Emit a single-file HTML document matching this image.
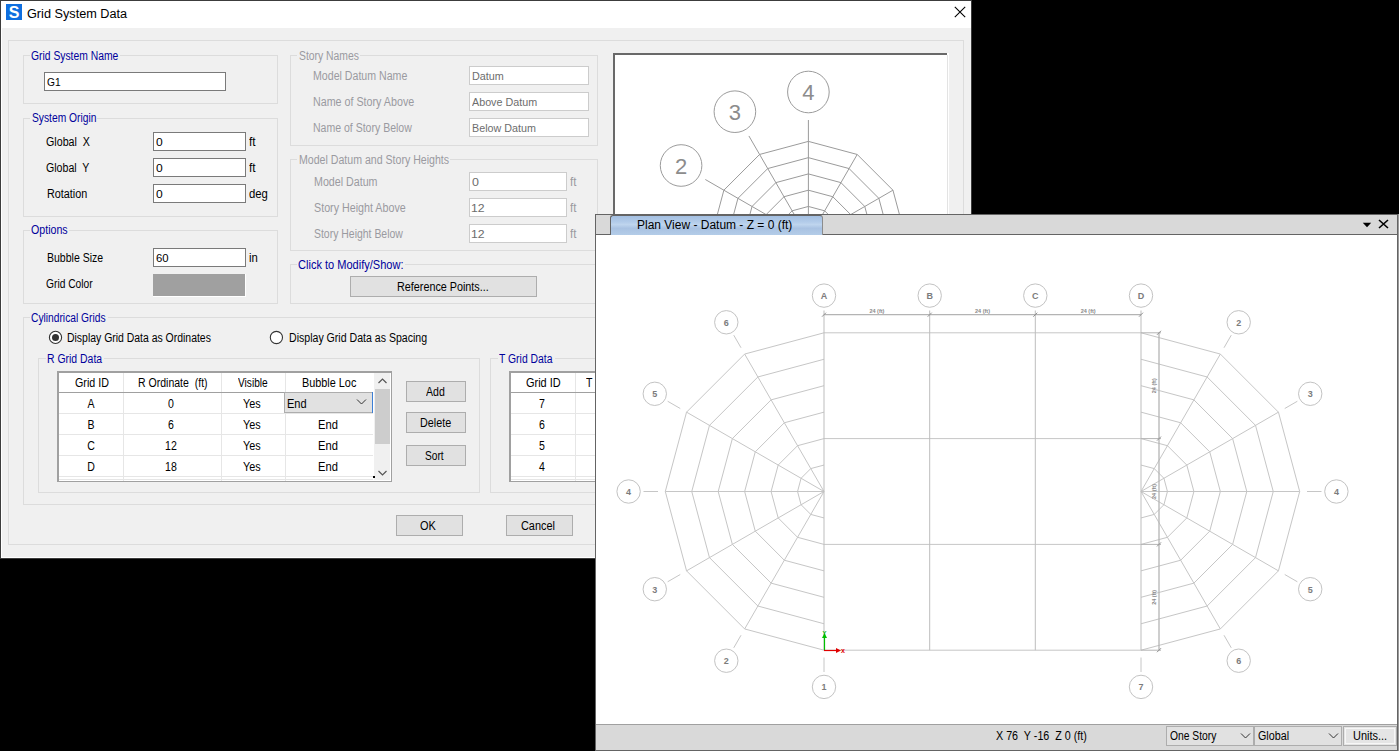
<!DOCTYPE html><html><head><meta charset="utf-8"><style>
html,body{margin:0;padding:0;}
body{width:1399px;height:751px;background:#000;position:relative;overflow:hidden;font-family:"Liberation Sans", sans-serif;}
.t{position:absolute;white-space:pre;font-family:"Liberation Sans", sans-serif;}
.r{position:absolute;box-sizing:content-box;}
svg{position:absolute;}
</style></head><body>
<div class="r" style="left:0px;top:0px;width:972px;height:559px;background:#f0f0f0;"></div>
<div class="r" style="left:0px;top:0px;width:971px;height:1px;background:#3c3c3c;"></div>
<div class="r" style="left:0px;top:0px;width:1px;height:559px;background:#3c3c3c;"></div>
<div class="r" style="left:971px;top:0px;width:1px;height:559px;background:#3c3c3c;"></div>
<div class="r" style="left:1px;top:1px;width:970px;height:27px;background:#ffffff;"></div>
<div class="r" style="left:1px;top:557px;width:970px;height:1px;background:#ffffff;"></div>
<div class="r" style="left:1px;top:28px;width:1px;height:529px;background:#ffffff;"></div>
<div class="r" style="left:0px;top:558px;width:972px;height:1px;background:#3c3c3c;"></div>
<div class="r" style="left:6px;top:4px;width:16px;height:16px;background:#0f6fdf;"></div>
<svg style="left:6px;top:4px" width="16" height="16" viewBox="0 0 16 16"><text x="8" y="14.3" font-size="16" font-weight="bold" fill="#fff" text-anchor="middle" font-family="Liberation Sans">S</text></svg>
<div class="t" style="left:27.09px;top:8px;font-size:12.5px;line-height:12.5px;color:#000;transform:scaleX(1.0148);transform-origin:0 0;">Grid System Data</div>
<svg style="left:954px;top:6px" width="12" height="12" viewBox="0 0 12 12"><path d="M0.8 0.8L11.2 11.2M11.2 0.8L0.8 11.2" stroke="#000" stroke-width="1.1"/></svg>
<div class="r" style="left:8px;top:40px;width:955px;height:1px;background:#dcdcdc;"></div>
<div class="r" style="left:8px;top:544px;width:956px;height:1px;background:#dcdcdc;"></div>
<div class="r" style="left:8px;top:40px;width:1px;height:504px;background:#dcdcdc;"></div>
<div class="r" style="left:963px;top:40px;width:1px;height:504px;background:#dcdcdc;"></div>
<div class="r" style="left:23px;top:55px;width:7px;height:1px;background:#dcdcdc;"></div>
<div class="r" style="left:120px;top:55px;width:157px;height:1px;background:#dcdcdc;"></div>
<div class="r" style="left:23px;top:103px;width:255px;height:1px;background:#dcdcdc;"></div>
<div class="r" style="left:23px;top:55px;width:1px;height:48px;background:#dcdcdc;"></div>
<div class="r" style="left:277px;top:55px;width:1px;height:48px;background:#dcdcdc;"></div>
<div class="t" style="left:31.18px;top:50px;font-size:12px;line-height:12px;color:#00009c;transform:scaleX(0.8608);transform-origin:0 0;">Grid System Name</div>
<div class="r" style="left:44px;top:72px;width:180px;height:17px;background:#fff;border:1px solid #7a7a7a;"></div>
<div class="t" style="left:46.79px;top:77px;font-size:11px;line-height:11px;color:#000;transform:scaleX(0.9265);transform-origin:0 0;">G1</div>
<div class="r" style="left:23px;top:118px;width:7px;height:1px;background:#dcdcdc;"></div>
<div class="r" style="left:97px;top:118px;width:180px;height:1px;background:#dcdcdc;"></div>
<div class="r" style="left:23px;top:216px;width:255px;height:1px;background:#dcdcdc;"></div>
<div class="r" style="left:23px;top:118px;width:1px;height:98px;background:#dcdcdc;"></div>
<div class="r" style="left:277px;top:118px;width:1px;height:98px;background:#dcdcdc;"></div>
<div class="t" style="left:31.53px;top:112px;font-size:12px;line-height:12px;color:#00009c;transform:scaleX(0.8548);transform-origin:0 0;">System Origin</div>
<div class="t" style="left:46.27px;top:136px;font-size:12px;line-height:12px;color:#000;transform:scaleX(0.8907);transform-origin:0 0;">Global  X</div>
<div class="r" style="left:153px;top:132px;width:91px;height:17px;background:#fff;border:1px solid #7a7a7a;"></div>
<div class="t" style="left:155.66px;top:137px;font-size:11px;line-height:11px;color:#000;transform:scaleX(1.0943);transform-origin:0 0;">0</div>
<div class="t" style="left:248.55px;top:136px;font-size:12px;line-height:12px;color:#000;transform:scaleX(0.9922);transform-origin:0 0;">ft</div>
<div class="t" style="left:46.27px;top:162px;font-size:12px;line-height:12px;color:#000;transform:scaleX(0.8841);transform-origin:0 0;">Global  Y</div>
<div class="r" style="left:153px;top:158px;width:91px;height:17px;background:#fff;border:1px solid #7a7a7a;"></div>
<div class="t" style="left:155.66px;top:163px;font-size:11px;line-height:11px;color:#000;transform:scaleX(1.0943);transform-origin:0 0;">0</div>
<div class="t" style="left:248.55px;top:162px;font-size:12px;line-height:12px;color:#000;transform:scaleX(0.9922);transform-origin:0 0;">ft</div>
<div class="t" style="left:46.64px;top:188px;font-size:12px;line-height:12px;color:#000;transform:scaleX(0.901);transform-origin:0 0;">Rotation</div>
<div class="r" style="left:153px;top:184px;width:91px;height:17px;background:#fff;border:1px solid #7a7a7a;"></div>
<div class="t" style="left:155.66px;top:189px;font-size:11px;line-height:11px;color:#000;transform:scaleX(1.0943);transform-origin:0 0;">0</div>
<div class="t" style="left:249.23px;top:188px;font-size:12px;line-height:12px;color:#000;transform:scaleX(0.944);transform-origin:0 0;">deg</div>
<div class="r" style="left:23px;top:230px;width:7px;height:1px;background:#dcdcdc;"></div>
<div class="r" style="left:69px;top:230px;width:208px;height:1px;background:#dcdcdc;"></div>
<div class="r" style="left:23px;top:303px;width:255px;height:1px;background:#dcdcdc;"></div>
<div class="r" style="left:23px;top:230px;width:1px;height:73px;background:#dcdcdc;"></div>
<div class="r" style="left:277px;top:230px;width:1px;height:73px;background:#dcdcdc;"></div>
<div class="t" style="left:31.11px;top:224px;font-size:12px;line-height:12px;color:#00009c;transform:scaleX(0.8861);transform-origin:0 0;">Options</div>
<div class="t" style="left:46.57px;top:252px;font-size:12px;line-height:12px;color:#000;transform:scaleX(0.8761);transform-origin:0 0;">Bubble Size</div>
<div class="r" style="left:153px;top:248px;width:91px;height:17px;background:#fff;border:1px solid #7a7a7a;"></div>
<div class="t" style="left:155.53px;top:253px;font-size:11px;line-height:11px;color:#000;transform:scaleX(1.0311);transform-origin:0 0;">60</div>
<div class="t" style="left:248.95px;top:252px;font-size:12px;line-height:12px;color:#000;transform:scaleX(0.9419);transform-origin:0 0;">in</div>
<div class="t" style="left:46.29px;top:278px;font-size:12px;line-height:12px;color:#000;transform:scaleX(0.8534);transform-origin:0 0;">Grid Color</div>
<div class="r" style="left:153px;top:274px;width:92px;height:22px;background:#a0a0a0;"></div>
<div class="r" style="left:153px;top:296px;width:93px;height:1px;background:#ffffff;"></div>
<div class="r" style="left:245px;top:274px;width:1px;height:23px;background:#ffffff;"></div>
<div class="r" style="left:23px;top:317px;width:7px;height:1px;background:#dcdcdc;"></div>
<div class="r" style="left:108px;top:317px;width:592px;height:1px;background:#dcdcdc;"></div>
<div class="r" style="left:23px;top:504px;width:678px;height:1px;background:#dcdcdc;"></div>
<div class="r" style="left:23px;top:317px;width:1px;height:187px;background:#dcdcdc;"></div>
<div class="r" style="left:700px;top:317px;width:1px;height:187px;background:#dcdcdc;"></div>
<div class="t" style="left:31.29px;top:312px;font-size:12px;line-height:12px;color:#00009c;transform:scaleX(0.8535);transform-origin:0 0;">Cylindrical Grids</div>
<svg style="left:47px;top:329px" width="17" height="17" viewBox="0 0 17 17"><circle cx="8.5" cy="8.4" r="6.1" fill="#fff" stroke="#333" stroke-width="1.1"/><circle cx="8.5" cy="8.4" r="3.5" fill="#333"/></svg>
<div class="t" style="left:67.47px;top:332px;font-size:12px;line-height:12px;color:#000;transform:scaleX(0.8699);transform-origin:0 0;">Display Grid Data as Ordinates</div>
<svg style="left:268px;top:329px" width="17" height="17" viewBox="0 0 17 17"><circle cx="8.4" cy="8.5" r="6.1" fill="#fff" stroke="#333" stroke-width="1.1"/></svg>
<div class="t" style="left:288.66px;top:332px;font-size:12px;line-height:12px;color:#000;transform:scaleX(0.8813);transform-origin:0 0;">Display Grid Data as Spacing</div>
<div class="r" style="left:38px;top:358px;width:8px;height:1px;background:#dcdcdc;"></div>
<div class="r" style="left:104px;top:358px;width:375px;height:1px;background:#dcdcdc;"></div>
<div class="r" style="left:38px;top:492px;width:442px;height:1px;background:#dcdcdc;"></div>
<div class="r" style="left:38px;top:358px;width:1px;height:134px;background:#dcdcdc;"></div>
<div class="r" style="left:479px;top:358px;width:1px;height:134px;background:#dcdcdc;"></div>
<div class="t" style="left:46.87px;top:353px;font-size:12px;line-height:12px;color:#00009c;transform:scaleX(0.8695);transform-origin:0 0;">R Grid Data</div>
<div class="r" style="left:57px;top:371px;width:332px;height:108px;background:#ffffff;border:1px solid #a0a0a0;border-width:2px 1px 1px 2px;"></div>
<div class="r" style="left:59px;top:392px;width:314px;height:1px;background:#a0a0a0;"></div>
<div class="r" style="left:123px;top:373px;width:1px;height:19px;background:#e6e6e6;"></div>
<div class="r" style="left:123px;top:393px;width:1px;height:88px;background:#e6e6e6;"></div>
<div class="r" style="left:221px;top:373px;width:1px;height:19px;background:#e6e6e6;"></div>
<div class="r" style="left:221px;top:393px;width:1px;height:88px;background:#e6e6e6;"></div>
<div class="r" style="left:285px;top:373px;width:1px;height:19px;background:#e6e6e6;"></div>
<div class="r" style="left:285px;top:393px;width:1px;height:88px;background:#e6e6e6;"></div>
<div class="r" style="left:59px;top:413px;width:314px;height:1px;background:#e6e6e6;"></div>
<div class="r" style="left:59px;top:434px;width:314px;height:1px;background:#e6e6e6;"></div>
<div class="r" style="left:59px;top:455px;width:314px;height:1px;background:#e6e6e6;"></div>
<div class="r" style="left:59px;top:476px;width:314px;height:1px;background:#e6e6e6;"></div>
<div class="r" style="left:59px;top:479px;width:314px;height:1px;background:#e6e6e6;"></div>
<div class="t" style="left:74.86px;top:377px;font-size:12px;line-height:12px;color:#000;transform:scaleX(0.8928);transform-origin:0 0;">Grid ID</div>
<div class="t" style="left:137.87px;top:377px;font-size:12px;line-height:12px;color:#000;transform:scaleX(0.877);transform-origin:0 0;">R Ordinate  (ft)</div>
<div class="t" style="left:237.96px;top:377px;font-size:12px;line-height:12px;color:#000;transform:scaleX(0.8452);transform-origin:0 0;">Visible</div>
<div class="t" style="left:302.34px;top:377px;font-size:12px;line-height:12px;color:#000;transform:scaleX(0.9048);transform-origin:0 0;">Bubble Loc</div>
<div class="t" style="left:90.60px;top:398px;font-size:12px;line-height:12px;color:#000;transform:translateX(-50%) scaleX(0.88);transform-origin:50% 0;">A</div>
<div class="t" style="left:171.10px;top:398px;font-size:12px;line-height:12px;color:#000;transform:translateX(-50%) scaleX(0.88);transform-origin:50% 0;">0</div>
<div class="t" style="left:242.97px;top:398px;font-size:12px;line-height:12px;color:#000;transform:scaleX(0.9024);transform-origin:0 0;">Yes</div>
<div class="t" style="left:90.60px;top:419px;font-size:12px;line-height:12px;color:#000;transform:translateX(-50%) scaleX(0.88);transform-origin:50% 0;">B</div>
<div class="t" style="left:171.10px;top:419px;font-size:12px;line-height:12px;color:#000;transform:translateX(-50%) scaleX(0.88);transform-origin:50% 0;">6</div>
<div class="t" style="left:242.97px;top:419px;font-size:12px;line-height:12px;color:#000;transform:scaleX(0.9024);transform-origin:0 0;">Yes</div>
<div class="t" style="left:318.22px;top:419px;font-size:12px;line-height:12px;color:#000;transform:scaleX(0.9313);transform-origin:0 0;">End</div>
<div class="t" style="left:90.60px;top:440px;font-size:12px;line-height:12px;color:#000;transform:translateX(-50%) scaleX(0.88);transform-origin:50% 0;">C</div>
<div class="t" style="left:171.10px;top:440px;font-size:12px;line-height:12px;color:#000;transform:translateX(-50%) scaleX(0.88);transform-origin:50% 0;">12</div>
<div class="t" style="left:242.97px;top:440px;font-size:12px;line-height:12px;color:#000;transform:scaleX(0.9024);transform-origin:0 0;">Yes</div>
<div class="t" style="left:318.22px;top:440px;font-size:12px;line-height:12px;color:#000;transform:scaleX(0.9313);transform-origin:0 0;">End</div>
<div class="t" style="left:90.60px;top:461px;font-size:12px;line-height:12px;color:#000;transform:translateX(-50%) scaleX(0.88);transform-origin:50% 0;">D</div>
<div class="t" style="left:171.10px;top:461px;font-size:12px;line-height:12px;color:#000;transform:translateX(-50%) scaleX(0.88);transform-origin:50% 0;">18</div>
<div class="t" style="left:242.97px;top:461px;font-size:12px;line-height:12px;color:#000;transform:scaleX(0.9024);transform-origin:0 0;">Yes</div>
<div class="t" style="left:318.22px;top:461px;font-size:12px;line-height:12px;color:#000;transform:scaleX(0.9313);transform-origin:0 0;">End</div>
<div class="r" style="left:284px;top:392px;width:87px;height:19px;background:#e1e1e1;border:1px solid #adadad;"></div>
<div class="r" style="left:372px;top:392px;width:1px;height:21px;background:#3c7fd6;"></div>
<div class="t" style="left:287.42px;top:398px;font-size:12px;line-height:12px;color:#000;transform:scaleX(0.9211);transform-origin:0 0;">End</div>
<svg style="left:356px;top:398px" width="12" height="8" viewBox="0 0 12 8"><path d="M1 1.5L5.5 6L10 1.5" fill="none" stroke="#333" stroke-width="1"/></svg>
<div class="r" style="left:374px;top:373px;width:16px;height:107px;background:#f0f0f0;"></div>
<div class="r" style="left:375px;top:389px;width:15px;height:55px;background:#cdcdcd;"></div>
<svg style="left:377px;top:376px" width="12" height="10" viewBox="0 0 12 10"><path d="M1.5 7L5.5 3L9.5 7" fill="none" stroke="#555" stroke-width="1.2"/></svg>
<svg style="left:377px;top:468px" width="12" height="10" viewBox="0 0 12 10"><path d="M1.5 3L5.5 7L9.5 3" fill="none" stroke="#555" stroke-width="1.2"/></svg>
<div class="r" style="left:373px;top:476px;width:2px;height:2px;background:#000;"></div>
<div class="r" style="left:406px;top:381px;width:58px;height:19px;background:#e1e1e1;border:1px solid #adadad;"></div>
<div class="t" style="left:425.80px;top:386px;font-size:12px;line-height:12px;color:#000;transform:scaleX(0.8786);transform-origin:0 0;">Add</div>
<div class="r" style="left:406px;top:412px;width:58px;height:19px;background:#e1e1e1;border:1px solid #adadad;"></div>
<div class="t" style="left:419.65px;top:417px;font-size:12px;line-height:12px;color:#000;transform:scaleX(0.8976);transform-origin:0 0;">Delete</div>
<div class="r" style="left:406px;top:445px;width:58px;height:19px;background:#e1e1e1;border:1px solid #adadad;"></div>
<div class="t" style="left:425.33px;top:450px;font-size:12px;line-height:12px;color:#000;transform:scaleX(0.8478);transform-origin:0 0;">Sort</div>
<div class="r" style="left:490px;top:358px;width:8px;height:1px;background:#dcdcdc;"></div>
<div class="r" style="left:555px;top:358px;width:345px;height:1px;background:#dcdcdc;"></div>
<div class="r" style="left:490px;top:492px;width:411px;height:1px;background:#dcdcdc;"></div>
<div class="r" style="left:490px;top:358px;width:1px;height:134px;background:#dcdcdc;"></div>
<div class="r" style="left:900px;top:358px;width:1px;height:134px;background:#dcdcdc;"></div>
<div class="t" style="left:499.48px;top:353px;font-size:12px;line-height:12px;color:#00009c;transform:scaleX(0.8653);transform-origin:0 0;">T Grid Data</div>
<div class="r" style="left:509px;top:371px;width:200px;height:108px;background:#ffffff;border:1px solid #a0a0a0;border-width:2px 1px 1px 2px;"></div>
<div class="r" style="left:511px;top:392px;width:199px;height:1px;background:#a0a0a0;"></div>
<div class="r" style="left:575px;top:373px;width:1px;height:19px;background:#e6e6e6;"></div>
<div class="r" style="left:575px;top:393px;width:1px;height:88px;background:#e6e6e6;"></div>
<div class="r" style="left:511px;top:413px;width:199px;height:1px;background:#e6e6e6;"></div>
<div class="r" style="left:511px;top:434px;width:199px;height:1px;background:#e6e6e6;"></div>
<div class="r" style="left:511px;top:455px;width:199px;height:1px;background:#e6e6e6;"></div>
<div class="r" style="left:511px;top:476px;width:199px;height:1px;background:#e6e6e6;"></div>
<div class="r" style="left:511px;top:479px;width:199px;height:1px;background:#e6e6e6;"></div>
<div class="t" style="left:526.45px;top:377px;font-size:12px;line-height:12px;color:#000;transform:scaleX(0.9118);transform-origin:0 0;">Grid ID</div>
<div class="t" style="left:586.00px;top:377px;font-size:12px;line-height:12px;color:#000;transform:scaleX(0.88);transform-origin:0 0;">T</div>
<div class="t" style="left:541.90px;top:398px;font-size:12px;line-height:12px;color:#000;transform:translateX(-50%) scaleX(0.88);transform-origin:50% 0;">7</div>
<div class="t" style="left:541.90px;top:419px;font-size:12px;line-height:12px;color:#000;transform:translateX(-50%) scaleX(0.88);transform-origin:50% 0;">6</div>
<div class="t" style="left:541.90px;top:440px;font-size:12px;line-height:12px;color:#000;transform:translateX(-50%) scaleX(0.88);transform-origin:50% 0;">5</div>
<div class="t" style="left:541.90px;top:461px;font-size:12px;line-height:12px;color:#000;transform:translateX(-50%) scaleX(0.88);transform-origin:50% 0;">4</div>
<div class="r" style="left:396px;top:515px;width:65px;height:19px;background:#e1e1e1;border:1px solid #adadad;"></div>
<div class="t" style="left:420.10px;top:520px;font-size:12px;line-height:12px;color:#000;transform:scaleX(0.9129);transform-origin:0 0;">OK</div>
<div class="r" style="left:506px;top:515px;width:65px;height:19px;background:#e1e1e1;border:1px solid #adadad;"></div>
<div class="t" style="left:520.96px;top:520px;font-size:12px;line-height:12px;color:#000;transform:scaleX(0.9083);transform-origin:0 0;">Cancel</div>
<div class="r" style="left:290px;top:55px;width:7px;height:1px;background:#dcdcdc;"></div>
<div class="r" style="left:360px;top:55px;width:237px;height:1px;background:#dcdcdc;"></div>
<div class="r" style="left:290px;top:145px;width:308px;height:1px;background:#dcdcdc;"></div>
<div class="r" style="left:290px;top:55px;width:1px;height:90px;background:#dcdcdc;"></div>
<div class="r" style="left:597px;top:55px;width:1px;height:90px;background:#dcdcdc;"></div>
<div class="t" style="left:298.72px;top:50px;font-size:12px;line-height:12px;color:#9a9aa0;transform:scaleX(0.864);transform-origin:0 0;">Story Names</div>
<div class="t" style="left:313.46px;top:70px;font-size:12px;line-height:12px;color:#9a9aa0;transform:scaleX(0.8836);transform-origin:0 0;">Model Datum Name</div>
<div class="r" style="left:469px;top:66px;width:118px;height:17px;background:#fff;border:1px solid #cccccc;"></div>
<div class="t" style="left:471.51px;top:71px;font-size:11px;line-height:11px;color:#6d6d6d;transform:scaleX(0.9838);transform-origin:0 0;">Datum</div>
<div class="t" style="left:313.45px;top:96px;font-size:12px;line-height:12px;color:#9a9aa0;transform:scaleX(0.8928);transform-origin:0 0;">Name of Story Above</div>
<div class="r" style="left:469px;top:92px;width:118px;height:17px;background:#fff;border:1px solid #cccccc;"></div>
<div class="t" style="left:472.40px;top:97px;font-size:11px;line-height:11px;color:#6d6d6d;transform:scaleX(0.9765);transform-origin:0 0;">Above Datum</div>
<div class="t" style="left:313.47px;top:122px;font-size:12px;line-height:12px;color:#9a9aa0;transform:scaleX(0.8766);transform-origin:0 0;">Name of Story Below</div>
<div class="r" style="left:469px;top:118px;width:118px;height:17px;background:#fff;border:1px solid #cccccc;"></div>
<div class="t" style="left:471.52px;top:123px;font-size:11px;line-height:11px;color:#6d6d6d;transform:scaleX(0.9765);transform-origin:0 0;">Below Datum</div>
<div class="r" style="left:290px;top:159px;width:7px;height:1px;background:#dcdcdc;"></div>
<div class="r" style="left:450px;top:159px;width:147px;height:1px;background:#dcdcdc;"></div>
<div class="r" style="left:290px;top:250px;width:308px;height:1px;background:#dcdcdc;"></div>
<div class="r" style="left:290px;top:159px;width:1px;height:91px;background:#dcdcdc;"></div>
<div class="r" style="left:597px;top:159px;width:1px;height:91px;background:#dcdcdc;"></div>
<div class="t" style="left:298.56px;top:154px;font-size:12px;line-height:12px;color:#9a9aa0;transform:scaleX(0.8824);transform-origin:0 0;">Model Datum and Story Heights</div>
<div class="t" style="left:313.66px;top:176px;font-size:12px;line-height:12px;color:#9a9aa0;transform:scaleX(0.8894);transform-origin:0 0;">Model Datum</div>
<div class="r" style="left:469px;top:172px;width:96px;height:17px;background:#fff;border:1px solid #cccccc;"></div>
<div class="t" style="left:471.55px;top:177px;font-size:11px;line-height:11px;color:#6d6d6d;transform:scaleX(1.1321);transform-origin:0 0;">0</div>
<div class="t" style="left:569.76px;top:176px;font-size:12px;line-height:12px;color:#9a9aa0;transform:scaleX(0.9612);transform-origin:0 0;">ft</div>
<div class="t" style="left:314.01px;top:202px;font-size:12px;line-height:12px;color:#9a9aa0;transform:scaleX(0.8933);transform-origin:0 0;">Story Height Above</div>
<div class="r" style="left:469px;top:198px;width:96px;height:17px;background:#fff;border:1px solid #cccccc;"></div>
<div class="t" style="left:471.05px;top:203px;font-size:11px;line-height:11px;color:#6d6d6d;transform:scaleX(1.1152);transform-origin:0 0;">12</div>
<div class="t" style="left:569.76px;top:202px;font-size:12px;line-height:12px;color:#9a9aa0;transform:scaleX(0.9612);transform-origin:0 0;">ft</div>
<div class="t" style="left:314.02px;top:228px;font-size:12px;line-height:12px;color:#9a9aa0;transform:scaleX(0.8705);transform-origin:0 0;">Story Height Below</div>
<div class="r" style="left:469px;top:224px;width:96px;height:17px;background:#fff;border:1px solid #cccccc;"></div>
<div class="t" style="left:471.05px;top:229px;font-size:11px;line-height:11px;color:#6d6d6d;transform:scaleX(1.1152);transform-origin:0 0;">12</div>
<div class="t" style="left:569.76px;top:228px;font-size:12px;line-height:12px;color:#9a9aa0;transform:scaleX(0.9612);transform-origin:0 0;">ft</div>
<div class="r" style="left:290px;top:264px;width:7px;height:1px;background:#dcdcdc;"></div>
<div class="r" style="left:405px;top:264px;width:295px;height:1px;background:#dcdcdc;"></div>
<div class="r" style="left:290px;top:303px;width:411px;height:1px;background:#dcdcdc;"></div>
<div class="r" style="left:290px;top:264px;width:1px;height:39px;background:#dcdcdc;"></div>
<div class="r" style="left:700px;top:264px;width:1px;height:39px;background:#dcdcdc;"></div>
<div class="t" style="left:298.15px;top:259px;font-size:12px;line-height:12px;color:#00009c;transform:scaleX(0.9199);transform-origin:0 0;">Click to Modify/Show:</div>
<div class="r" style="left:350px;top:276px;width:185px;height:19px;background:#e1e1e1;border:1px solid #adadad;"></div>
<div class="t" style="left:396.55px;top:281px;font-size:12px;line-height:12px;color:#000;transform:scaleX(0.899);transform-origin:0 0;">Reference Points...</div>
<div class="r" style="left:613px;top:53px;width:335px;height:170px;background:#ffffff;"></div>
<div class="r" style="left:613px;top:53px;width:334px;height:2px;background:#696969;"></div>
<div class="r" style="left:613px;top:53px;width:2px;height:170px;background:#696969;"></div>
<div class="r" style="left:947px;top:55px;width:1px;height:159px;background:#e3e3e3;"></div>
<div class="r" style="left:948px;top:53px;width:1px;height:161px;background:#ffffff;"></div>
<svg style="left:615px;top:55px" width="332" height="160" viewBox="615 55 332 160"><polyline points="824.67,239.00 822.49,230.87 816.53,224.91 808.40,222.73 800.26,224.91 794.31,230.87 792.13,239.00" fill="none" stroke="#9b9b9b" stroke-width="1"/>
<polyline points="840.94,239.00 836.58,222.73 824.67,210.82 808.40,206.46 792.13,210.82 780.22,222.73 775.86,239.00" fill="none" stroke="#9b9b9b" stroke-width="1"/>
<polyline points="857.21,239.00 850.67,214.59 832.80,196.73 808.40,190.19 784.00,196.73 766.13,214.59 759.59,239.00" fill="none" stroke="#9b9b9b" stroke-width="1"/>
<polyline points="873.48,239.00 864.76,206.46 840.94,182.64 808.40,173.92 775.86,182.64 752.04,206.46 743.32,239.00" fill="none" stroke="#9b9b9b" stroke-width="1"/>
<polyline points="889.75,239.00 878.85,198.33 849.07,168.55 808.40,157.65 767.73,168.55 737.95,198.33 727.05,239.00" fill="none" stroke="#9b9b9b" stroke-width="1"/>
<polyline points="906.02,239.00 892.94,190.19 857.21,154.46 808.40,141.38 759.59,154.46 723.86,190.19 710.78,239.00" fill="none" stroke="#9b9b9b" stroke-width="1"/>
<line x1="808.4" y1="239.0" x2="906.02" y2="239.00" stroke="#9b9b9b" stroke-width="1"/>
<line x1="808.4" y1="239.0" x2="892.94" y2="190.19" stroke="#9b9b9b" stroke-width="1"/>
<line x1="808.4" y1="239.0" x2="857.21" y2="154.46" stroke="#9b9b9b" stroke-width="1"/>
<line x1="808.4" y1="239.0" x2="808.40" y2="120.00" stroke="#9b9b9b" stroke-width="1"/>
<line x1="808.4" y1="239.0" x2="748.90" y2="135.94" stroke="#9b9b9b" stroke-width="1"/>
<line x1="808.4" y1="239.0" x2="705.34" y2="179.50" stroke="#9b9b9b" stroke-width="1"/>
<line x1="808.4" y1="239.0" x2="689.40" y2="239.00" stroke="#9b9b9b" stroke-width="1"/>
<circle cx="808.40" cy="92.00" r="20.8" fill="#fff" stroke="#9b9b9b" stroke-width="1"/>
<text x="808.40" y="100.00" font-size="22" fill="#8c8c8c" text-anchor="middle" font-family="Liberation Sans">4</text>
<circle cx="734.90" cy="111.69" r="20.8" fill="#fff" stroke="#9b9b9b" stroke-width="1"/>
<text x="734.90" y="119.69" font-size="22" fill="#8c8c8c" text-anchor="middle" font-family="Liberation Sans">3</text>
<circle cx="681.09" cy="165.50" r="20.8" fill="#fff" stroke="#9b9b9b" stroke-width="1"/>
<text x="681.09" y="173.50" font-size="22" fill="#8c8c8c" text-anchor="middle" font-family="Liberation Sans">2</text>
<circle cx="661.40" cy="239.00" r="20.8" fill="#fff" stroke="#9b9b9b" stroke-width="1"/>
<text x="661.40" y="247.00" font-size="22" fill="#8c8c8c" text-anchor="middle" font-family="Liberation Sans">1</text></svg>
<div class="r" style="left:595px;top:214px;width:804px;height:537px;background:#ffffff;"></div>
<div class="r" style="left:595px;top:214px;width:804px;height:1px;background:#646464;"></div>
<div class="r" style="left:595px;top:214px;width:1px;height:537px;background:#646464;"></div>
<div class="r" style="left:1397px;top:214px;width:1px;height:537px;background:#646464;"></div>
<div class="r" style="left:1398px;top:214px;width:1px;height:537px;background:#9a9a9a;"></div>
<div class="r" style="left:596px;top:215px;width:801px;height:19px;background:#d9d9d9;"></div>
<div class="r" style="left:596px;top:234px;width:14px;height:1px;background:#646464;"></div>
<div class="r" style="left:823px;top:234px;width:574px;height:1px;background:#646464;"></div>
<div class="r" style="left:610px;top:215px;width:213px;height:20px;background:linear-gradient(#a4c0e2 0%,#b2cbe9 30%,#bfd5ee 45%,#a9c2e2 65%,#b3cce8 100%);border-left:1px solid #646464;border-right:1px solid #8c8c8c;border-top:1px solid #646464;border-radius:3px 3px 0 0;box-sizing:border-box"></div>
<div class="t" style="left:637.35px;top:219px;font-size:12px;line-height:12px;color:#000;transform:scaleX(0.9987);transform-origin:0 0;">Plan View - Datum - Z = 0 (ft)</div>
<svg style="left:1362px;top:222px" width="10" height="6" viewBox="0 0 10 6"><path d="M0.8 0.8H9.2L5 5.2Z" fill="#000"/></svg>
<svg style="left:1378px;top:219px" width="11" height="10" viewBox="0 0 11 10"><path d="M1 1L10 9M10 1L1 9" stroke="#000" stroke-width="1.6"/></svg>
<div class="r" style="left:596px;top:724px;width:801px;height:1px;background:#a0a0a0;"></div>
<div class="r" style="left:596px;top:725px;width:801px;height:25px;background:#d9d9d9;"></div>
<div class="r" style="left:596px;top:750px;width:802px;height:1px;background:#646464;"></div>
<div class="t" style="left:995.68px;top:730px;font-size:12px;line-height:12px;color:#000;transform:scaleX(0.8946);transform-origin:0 0;">X 76  Y -16  Z 0 (ft)</div>
<div class="r" style="left:1166px;top:726px;width:86px;height:18px;background:#e1e1e1;border:1px solid #adadad;"></div>
<div class="t" style="left:1170.03px;top:730px;font-size:12px;line-height:12px;color:#000;transform:scaleX(0.8579);transform-origin:0 0;">One Story</div>
<svg style="left:1240px;top:732px" width="12" height="8" viewBox="0 0 12 8"><path d="M1 1.5L5.5 6L10 1.5" fill="none" stroke="#333" stroke-width="1"/></svg>
<div class="r" style="left:1254px;top:726px;width:86px;height:18px;background:#e1e1e1;border:1px solid #adadad;"></div>
<div class="t" style="left:1257.66px;top:730px;font-size:12px;line-height:12px;color:#000;transform:scaleX(0.8949);transform-origin:0 0;">Global</div>
<svg style="left:1328px;top:732px" width="12" height="8" viewBox="0 0 12 8"><path d="M1 1.5L5.5 6L10 1.5" fill="none" stroke="#333" stroke-width="1"/></svg>
<div class="r" style="left:1343px;top:726px;width:52px;height:18px;background:#e5e5e5;border:1px solid #adadad;"></div>
<div class="r" style="left:1345px;top:728px;width:48px;height:14px;background:transparent;border:1px solid #f7f7f7;"></div>
<div class="t" style="left:1352.68px;top:730px;font-size:12px;line-height:12px;color:#000;transform:scaleX(0.9137);transform-origin:0 0;">Units...</div>
<svg style="left:596px;top:235px" width="801" height="489" viewBox="596 235 801 489"><polyline points="824.00,465.05 810.77,468.59 801.09,478.27 797.55,491.50 801.09,504.73 810.77,514.41 824.00,517.95" fill="none" stroke="#c6c6c6" stroke-width="1"/>
<polyline points="824.00,438.60 797.55,445.69 778.19,465.05 771.10,491.50 778.19,517.95 797.55,537.31 824.00,544.40" fill="none" stroke="#c6c6c6" stroke-width="1"/>
<polyline points="824.00,412.15 784.33,422.78 755.28,451.82 744.65,491.50 755.28,531.17 784.32,560.22 824.00,570.85" fill="none" stroke="#c6c6c6" stroke-width="1"/>
<polyline points="824.00,385.70 771.10,399.87 732.37,438.60 718.20,491.50 732.37,544.40 771.10,583.13 824.00,597.30" fill="none" stroke="#c6c6c6" stroke-width="1"/>
<polyline points="824.00,359.25 757.88,376.97 709.47,425.38 691.75,491.50 709.47,557.62 757.88,606.03 824.00,623.75" fill="none" stroke="#c6c6c6" stroke-width="1"/>
<polyline points="824.00,332.80 744.65,354.06 686.56,412.15 665.30,491.50 686.56,570.85 744.65,628.94 824.00,650.20" fill="none" stroke="#c6c6c6" stroke-width="1"/>
<line x1="824.0" y1="491.5" x2="744.65" y2="354.06" stroke="#c6c6c6" stroke-width="1"/>
<line x1="824.0" y1="491.5" x2="686.56" y2="412.15" stroke="#c6c6c6" stroke-width="1"/>
<line x1="824.0" y1="491.5" x2="665.30" y2="491.50" stroke="#c6c6c6" stroke-width="1"/>
<line x1="824.0" y1="491.5" x2="686.56" y2="570.85" stroke="#c6c6c6" stroke-width="1"/>
<line x1="824.0" y1="491.5" x2="744.65" y2="628.94" stroke="#c6c6c6" stroke-width="1"/>
<polyline points="1141.00,465.05 1154.22,468.59 1163.91,478.27 1167.45,491.50 1163.91,504.73 1154.22,514.41 1141.00,517.95" fill="none" stroke="#c6c6c6" stroke-width="1"/>
<polyline points="1141.00,438.60 1167.45,445.69 1186.81,465.05 1193.90,491.50 1186.81,517.95 1167.45,537.31 1141.00,544.40" fill="none" stroke="#c6c6c6" stroke-width="1"/>
<polyline points="1141.00,412.15 1180.67,422.78 1209.72,451.82 1220.35,491.50 1209.72,531.17 1180.67,560.22 1141.00,570.85" fill="none" stroke="#c6c6c6" stroke-width="1"/>
<polyline points="1141.00,385.70 1193.90,399.87 1232.63,438.60 1246.80,491.50 1232.63,544.40 1193.90,583.13 1141.00,597.30" fill="none" stroke="#c6c6c6" stroke-width="1"/>
<polyline points="1141.00,359.25 1207.12,376.97 1255.53,425.38 1273.25,491.50 1255.53,557.62 1207.12,606.03 1141.00,623.75" fill="none" stroke="#c6c6c6" stroke-width="1"/>
<polyline points="1141.00,332.80 1220.35,354.06 1278.44,412.15 1299.70,491.50 1278.44,570.85 1220.35,628.94 1141.00,650.20" fill="none" stroke="#c6c6c6" stroke-width="1"/>
<line x1="1141.0" y1="491.5" x2="1220.35" y2="354.06" stroke="#c6c6c6" stroke-width="1"/>
<line x1="1141.0" y1="491.5" x2="1278.44" y2="412.15" stroke="#c6c6c6" stroke-width="1"/>
<line x1="1141.0" y1="491.5" x2="1299.70" y2="491.50" stroke="#c6c6c6" stroke-width="1"/>
<line x1="1141.0" y1="491.5" x2="1278.44" y2="570.85" stroke="#c6c6c6" stroke-width="1"/>
<line x1="1141.0" y1="491.5" x2="1220.35" y2="628.94" stroke="#c6c6c6" stroke-width="1"/>
<line x1="824" y1="332.80" x2="1141" y2="332.80" stroke="#c6c6c6" stroke-width="1"/>
<line x1="824" y1="438.60" x2="1141" y2="438.60" stroke="#c6c6c6" stroke-width="1"/>
<line x1="824" y1="544.40" x2="1141" y2="544.40" stroke="#c6c6c6" stroke-width="1"/>
<line x1="824" y1="650.20" x2="1141" y2="650.20" stroke="#c6c6c6" stroke-width="1"/>
<line x1="824" y1="310.5" x2="824" y2="650.20" stroke="#bdbdbd" stroke-width="1"/>
<line x1="929.7" y1="310.5" x2="929.7" y2="650.20" stroke="#bdbdbd" stroke-width="1"/>
<line x1="1035.3" y1="310.5" x2="1035.3" y2="650.20" stroke="#bdbdbd" stroke-width="1"/>
<line x1="1141" y1="310.5" x2="1141" y2="650.20" stroke="#bdbdbd" stroke-width="1"/>
<line x1="824" y1="314.7" x2="1141" y2="314.7" stroke="#b4b4b4" stroke-width="1.3"/>
<line x1="822" y1="316.7" x2="826" y2="312.7" stroke="#909090" stroke-width="1"/>
<line x1="927.7" y1="316.7" x2="931.7" y2="312.7" stroke="#909090" stroke-width="1"/>
<line x1="1033.3" y1="316.7" x2="1037.3" y2="312.7" stroke="#909090" stroke-width="1"/>
<line x1="1139" y1="316.7" x2="1143" y2="312.7" stroke="#909090" stroke-width="1"/>
<text x="876.9" y="313" font-size="5.5" fill="#8a8a8a" text-anchor="middle" font-family="Liberation Sans" font-weight="bold">24 (ft)</text>
<text x="982.5" y="313" font-size="5.5" fill="#8a8a8a" text-anchor="middle" font-family="Liberation Sans" font-weight="bold">24 (ft)</text>
<text x="1088.2" y="313" font-size="5.5" fill="#8a8a8a" text-anchor="middle" font-family="Liberation Sans" font-weight="bold">24 (ft)</text>
<line x1="1159" y1="332.80" x2="1159" y2="650.20" stroke="#b4b4b4" stroke-width="1.3"/>
<line x1="1141" y1="332.80" x2="1161" y2="332.80" stroke="#b4b4b4" stroke-width="1"/>
<line x1="1157" y1="334.80" x2="1161" y2="330.80" stroke="#909090" stroke-width="1"/>
<line x1="1141" y1="438.60" x2="1161" y2="438.60" stroke="#b4b4b4" stroke-width="1"/>
<line x1="1157" y1="440.60" x2="1161" y2="436.60" stroke="#909090" stroke-width="1"/>
<line x1="1141" y1="544.40" x2="1161" y2="544.40" stroke="#b4b4b4" stroke-width="1"/>
<line x1="1157" y1="546.40" x2="1161" y2="542.40" stroke="#909090" stroke-width="1"/>
<line x1="1141" y1="650.20" x2="1161" y2="650.20" stroke="#b4b4b4" stroke-width="1"/>
<line x1="1157" y1="652.20" x2="1161" y2="648.20" stroke="#909090" stroke-width="1"/>
<text x="1156" y="385.7" font-size="5.5" fill="#8a8a8a" text-anchor="middle" font-family="Liberation Sans" font-weight="bold" transform="rotate(-90 1156 385.7)">24 (ft)</text>
<text x="1156" y="491.5" font-size="5.5" fill="#8a8a8a" text-anchor="middle" font-family="Liberation Sans" font-weight="bold" transform="rotate(-90 1156 491.5)">24 (ft)</text>
<text x="1156" y="597.3" font-size="5.5" fill="#8a8a8a" text-anchor="middle" font-family="Liberation Sans" font-weight="bold" transform="rotate(-90 1156 597.3)">24 (ft)</text>
<circle cx="824.00" cy="295.60" r="11.7" fill="#fff" stroke="#c3c3c3" stroke-width="1"/>
<text x="824.00" y="298.90" font-size="9" fill="#7c7c7c" text-anchor="middle" font-family="Liberation Sans" font-weight="bold">A</text>
<circle cx="929.70" cy="295.60" r="11.7" fill="#fff" stroke="#c3c3c3" stroke-width="1"/>
<text x="929.70" y="298.90" font-size="9" fill="#7c7c7c" text-anchor="middle" font-family="Liberation Sans" font-weight="bold">B</text>
<circle cx="1035.30" cy="295.60" r="11.7" fill="#fff" stroke="#c3c3c3" stroke-width="1"/>
<text x="1035.30" y="298.90" font-size="9" fill="#7c7c7c" text-anchor="middle" font-family="Liberation Sans" font-weight="bold">C</text>
<circle cx="1141.00" cy="295.60" r="11.7" fill="#fff" stroke="#c3c3c3" stroke-width="1"/>
<text x="1141.00" y="298.90" font-size="9" fill="#7c7c7c" text-anchor="middle" font-family="Liberation Sans" font-weight="bold">D</text>
<line x1="741.00" y1="347.74" x2="733.75" y2="335.18" stroke="#c6c6c6" stroke-width="1"/>
<circle cx="726.30" cy="322.28" r="11.7" fill="#fff" stroke="#c3c3c3" stroke-width="1"/>
<text x="726.30" y="325.58" font-size="9" fill="#7c7c7c" text-anchor="middle" font-family="Liberation Sans" font-weight="bold">6</text>
<line x1="680.24" y1="408.50" x2="667.68" y2="401.25" stroke="#c6c6c6" stroke-width="1"/>
<circle cx="654.78" cy="393.80" r="11.7" fill="#fff" stroke="#c3c3c3" stroke-width="1"/>
<text x="654.78" y="397.10" font-size="9" fill="#7c7c7c" text-anchor="middle" font-family="Liberation Sans" font-weight="bold">5</text>
<line x1="658.00" y1="491.50" x2="643.50" y2="491.50" stroke="#c6c6c6" stroke-width="1"/>
<circle cx="628.60" cy="491.50" r="11.7" fill="#fff" stroke="#c3c3c3" stroke-width="1"/>
<text x="628.60" y="494.80" font-size="9" fill="#7c7c7c" text-anchor="middle" font-family="Liberation Sans" font-weight="bold">4</text>
<line x1="680.24" y1="574.50" x2="667.68" y2="581.75" stroke="#c6c6c6" stroke-width="1"/>
<circle cx="654.78" cy="589.20" r="11.7" fill="#fff" stroke="#c3c3c3" stroke-width="1"/>
<text x="654.78" y="592.50" font-size="9" fill="#7c7c7c" text-anchor="middle" font-family="Liberation Sans" font-weight="bold">3</text>
<line x1="741.00" y1="635.26" x2="733.75" y2="647.82" stroke="#c6c6c6" stroke-width="1"/>
<circle cx="726.30" cy="660.72" r="11.7" fill="#fff" stroke="#c3c3c3" stroke-width="1"/>
<text x="726.30" y="664.02" font-size="9" fill="#7c7c7c" text-anchor="middle" font-family="Liberation Sans" font-weight="bold">2</text>
<line x1="824.00" y1="657.50" x2="824.00" y2="672.00" stroke="#c6c6c6" stroke-width="1"/>
<circle cx="824.00" cy="686.90" r="11.7" fill="#fff" stroke="#c3c3c3" stroke-width="1"/>
<text x="824.00" y="690.20" font-size="9" fill="#7c7c7c" text-anchor="middle" font-family="Liberation Sans" font-weight="bold">1</text>
<line x1="1224.00" y1="347.74" x2="1231.25" y2="335.18" stroke="#c6c6c6" stroke-width="1"/>
<circle cx="1238.70" cy="322.28" r="11.7" fill="#fff" stroke="#c3c3c3" stroke-width="1"/>
<text x="1238.70" y="325.58" font-size="9" fill="#7c7c7c" text-anchor="middle" font-family="Liberation Sans" font-weight="bold">2</text>
<line x1="1284.76" y1="408.50" x2="1297.32" y2="401.25" stroke="#c6c6c6" stroke-width="1"/>
<circle cx="1310.22" cy="393.80" r="11.7" fill="#fff" stroke="#c3c3c3" stroke-width="1"/>
<text x="1310.22" y="397.10" font-size="9" fill="#7c7c7c" text-anchor="middle" font-family="Liberation Sans" font-weight="bold">3</text>
<line x1="1307.00" y1="491.50" x2="1321.50" y2="491.50" stroke="#c6c6c6" stroke-width="1"/>
<circle cx="1336.40" cy="491.50" r="11.7" fill="#fff" stroke="#c3c3c3" stroke-width="1"/>
<text x="1336.40" y="494.80" font-size="9" fill="#7c7c7c" text-anchor="middle" font-family="Liberation Sans" font-weight="bold">4</text>
<line x1="1284.76" y1="574.50" x2="1297.32" y2="581.75" stroke="#c6c6c6" stroke-width="1"/>
<circle cx="1310.22" cy="589.20" r="11.7" fill="#fff" stroke="#c3c3c3" stroke-width="1"/>
<text x="1310.22" y="592.50" font-size="9" fill="#7c7c7c" text-anchor="middle" font-family="Liberation Sans" font-weight="bold">5</text>
<line x1="1224.00" y1="635.26" x2="1231.25" y2="647.82" stroke="#c6c6c6" stroke-width="1"/>
<circle cx="1238.70" cy="660.72" r="11.7" fill="#fff" stroke="#c3c3c3" stroke-width="1"/>
<text x="1238.70" y="664.02" font-size="9" fill="#7c7c7c" text-anchor="middle" font-family="Liberation Sans" font-weight="bold">6</text>
<line x1="1141.00" y1="657.50" x2="1141.00" y2="672.00" stroke="#c6c6c6" stroke-width="1"/>
<circle cx="1141.00" cy="686.90" r="11.7" fill="#fff" stroke="#c3c3c3" stroke-width="1"/>
<text x="1141.00" y="690.20" font-size="9" fill="#7c7c7c" text-anchor="middle" font-family="Liberation Sans" font-weight="bold">7</text>
<line x1="824.5" y1="650" x2="824.5" y2="636" stroke="#00c000" stroke-width="1.2"/>
<path d="M822 638L824.5 633L827 638Z" fill="#00c000"/>
<line x1="824" y1="650.5" x2="838" y2="650.5" stroke="#e00000" stroke-width="1.2"/>
<path d="M836 648L841 650.5L836 653Z" fill="#e00000"/>
<text x="824.5" y="635" font-size="6" fill="#00b000" text-anchor="middle" font-family="Liberation Sans" font-weight="bold">Y</text>
<text x="843" y="653" font-size="7" fill="#e00000" text-anchor="middle" font-family="Liberation Sans" font-weight="bold">x</text></svg>
</body></html>
